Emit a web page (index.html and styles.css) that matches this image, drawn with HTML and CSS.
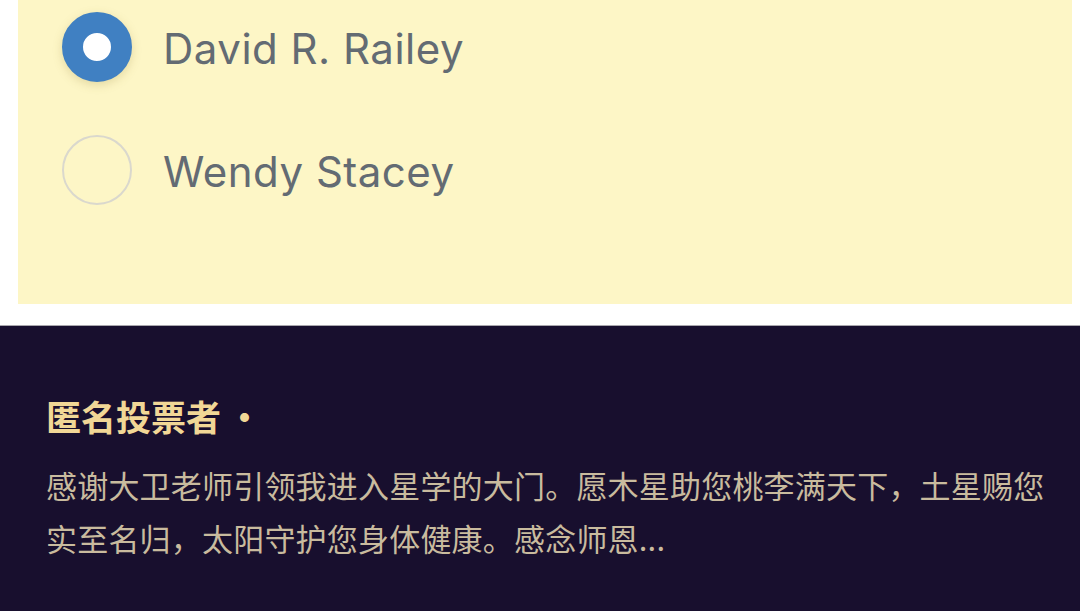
FILE: index.html
```html
<!DOCTYPE html>
<html lang="zh">
<head>
<meta charset="utf-8">
<link rel="stylesheet" href="styles.css">
</head>
<body>
<div class="panel">
  <div class="option">
    <span class="radio checked"></span>
    <span class="label">David R. Railey</span>
  </div>
  <div class="option">
    <span class="radio"></span>
    <span class="label">Wendy Stacey</span>
  </div>
</div>
<div class="gap"></div>
<section class="comments">
  <div class="author">匿名投票者<span class="dot">·</span></div>
  <p class="message">感谢大卫老师引领我进入星学的大门。愿木星助您桃李满天下，土星赐您实至名归，太阳守护您身体健康。感念师恩...</p>
</section>
</body>
</html>
```
FILE: styles.css
```css
html, body {
  margin: 0;
  padding: 0;
  background: #ffffff;
}
body {
  width: 1080px;
  height: 611px;
  overflow: hidden;
  font-family: "Noto Sans", "Noto Sans CJK SC", sans-serif;
}
.panel {
  margin: -26px 8px 0 18px;
  background: #fdf6c6;
  display: flex;
  flex-direction: column;
  padding-left: 44px;
  box-sizing: border-box;
  padding-top: 38px;
  height: 330px;
  gap: 53px;
}
.option {
  display: flex;
  align-items: center;
  gap: 31px;
  height: 70px;
}
.radio {
  width: 70px;
  height: 70px;
  border-radius: 50%;
  box-sizing: border-box;
  border: 2px solid #dad8cd;
  flex: none;
}
.radio.checked {
  border: 21px solid #4080c2;
  background: #ffffff;
  box-shadow: 0 3px 10px rgba(150, 130, 60, 0.25);
}
.label {
  font-family: "Inter", sans-serif;
  font-size: 42px;
  letter-spacing: 0.5px;
  color: #636b73;
  line-height: 70px;
  position: relative;
  top: 2px;
}
.gap {
  height: 21px;
  border-bottom: 1px solid #a9a7ad;
}
.comments {
  background: #180f2e;
  height: 300px;
  padding: 68px 26px 0 46px;
  box-sizing: border-box;
  font-family: "Noto Sans CJK SC", sans-serif;
}
.author {
  font-size: 35px;
  font-weight: 700;
  color: #f1d796;
  line-height: 44px;
}
.dot {
  margin-left: 6px;
}
.message {
  margin: 20px 0 0 0;
  font-size: 31px;
  letter-spacing: 0.2px;
  line-height: 53px;
  color: #c9bb9e;
}
```
